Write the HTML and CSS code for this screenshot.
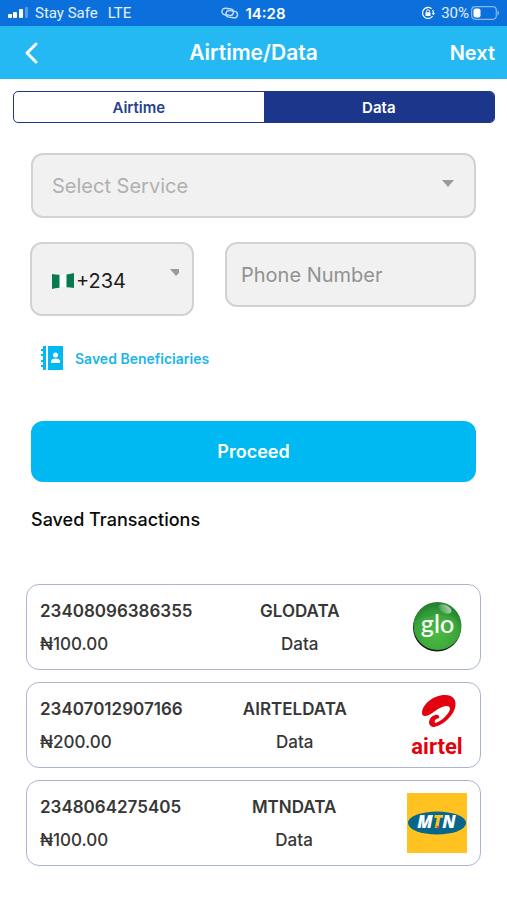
FILE: index.html
```html
<!DOCTYPE html>
<html lang="en">
<head>
<meta charset="utf-8">
<meta name="viewport" content="width=device-width, initial-scale=1">
<title>Airtime/Data</title>
<link rel="stylesheet" href="styles.css">
</head>
<body>
<div class="status">
  <div class="status-side">
    <svg width="21" height="12" viewBox="0 0 21 12" fill="#fff" aria-hidden="true"><rect x="0" y="7" width="4" height="4" rx="1"/><rect x="5" y="5" width="4" height="6" rx="1"/><rect x="11" y="2" width="4" height="9" rx="1"/><rect x="17" y="0" width="3" height="11" rx="1" opacity=".3"/></svg>
    <span>Stay Safe</span>
    <span class="network">LTE</span>
  </div>
  <div class="status-time">
    <svg width="18" height="12" viewBox="0 0 18 12" fill="none" stroke="#c3defc" stroke-width="1.4" aria-hidden="true"><rect x="1" y="1.500" width="11.500" height="6.500" rx="3.200" transform="rotate(8 6 4.500)"/><rect x="5" y="4" width="11.500" height="6.500" rx="3.200" transform="rotate(8 11 7)"/></svg>
    <span>14:28</span>
  </div>
  <div class="status-side status-end">
    <svg class="lock" width="14" height="14" viewBox="0 0 14 14" fill="none" stroke="#fff" aria-hidden="true"><path d="M10.500 2.700A5.500 5.500 0 1 0 11.600 10M12.400 8A5.500 5.500 0 0 0 11.600 4" stroke-width="1.300"/><path d="M10.700 7h3.300l-1.600 2.200z" fill="#fff" stroke="none"/><rect x="4.500" y="6.200" width="5" height="3.800" rx=".6" fill="#fff" stroke="none"/><path d="M5.500 6.500V5.300a1.500 1.500 0 0 1 3 0v1.200"/></svg>
    <span>30%</span>
    <svg width="28" height="14" viewBox="0 0 28 14" aria-hidden="true"><rect x=".7" y=".7" width="24.600" height="12.600" rx="3.500" fill="none" stroke="#82b9f2" stroke-width="1.200"/><rect x="2.500" y="2.500" width="7" height="9" rx="2" fill="#fff"/><path d="M26.500 4.500c2 .6 2 4.400 0 5z" fill="#82b9f2"/></svg>
  </div>
</div>
<header class="bar">
  <button class="back" type="button" aria-label="Back"><svg width="16" height="24" viewBox="0 0 16 24" fill="none" stroke="#fff" stroke-width="3" stroke-linecap="round" stroke-linejoin="round" aria-hidden="true"><path d="M12 3L3 12l9 9"/></svg></button>
  <h1>Airtime/Data</h1>
  <button class="next" type="button">Next</button>
</header>
<main>
  <div class="tabs" role="tablist">
    <button class="tab" type="button" role="tab" aria-selected="false">Airtime</button>
    <button class="tab tab-active" type="button" role="tab" aria-selected="true">Data</button>
  </div>
  <form class="form">
    <div class="field service">
      <select aria-label="Service"><option>Select Service</option></select>
      <svg class="arrow" width="12" height="7" viewBox="0 0 12 7" aria-hidden="true"><path d="M0 0h12L6 7z" fill="#9a9a9a"/></svg>
    </div>
    <div class="phone-row">
      <div class="field country">
        <svg class="flag" width="25" height="18" viewBox="0 0 25 18" aria-hidden="true"><path d="M1 2q11 2.500 22-1v15q-11-2.500-22 1z" fill="#fcfcfc"/><path d="M1 2q4 1 7.500 .8v13Q4 16 1 17zM15.500 2.400Q20 2 23 1v15q-3.500-.8-7.500-.8z" fill="#087a4d"/></svg>
        <select aria-label="Country code"><option>+234</option></select>
        <svg class="caret" width="9" height="7" viewBox="0 0 9 7" aria-hidden="true"><path d="M0 0h9v4L6 7z" fill="#9a9a9a"/></svg>
      </div>
      <input class="field phone" type="tel" aria-label="Phone Number" placeholder="Phone Number">
    </div>
    <a class="saved-link" href="#">
      <svg width="22" height="24" viewBox="0 0 22 24" fill="#00b9f2" aria-hidden="true"><path d="M2 0h3v24H2v-3H0v-2h2v-3H0v-2h2v-4H0V8h2V5H0V3h2z"/><path d="M7 0h15v24H7z"/><circle cx="14.500" cy="9" r="2.500" fill="#fff"/><path d="M10 17v-2q0-2.500 4.500-2.500T19 15v2z" fill="#fff"/></svg>
      <span>Saved Beneficiaries</span>
    </a>
    <button class="proceed" type="button">Proceed</button>
  </form>
  <h2>Saved Transactions</h2>
  <ul class="list">
    <li class="card">
      <div class="lines"><strong>23408096386355</strong><span>₦100.00</span></div>
      <div class="lines middle"><strong>GLODATA</strong><span>Data</span></div>
      <svg width="60" height="60" viewBox="0 0 60 60" role="img" aria-label="glo">
        <defs><radialGradient id="ball" cx=".48" cy=".65" r=".6"><stop offset="0" stop-color="#4dbb43"/><stop offset=".75" stop-color="#39a53a"/><stop offset="1" stop-color="#268330"/></radialGradient><linearGradient id="shine" x1="1" y1="0" x2="0" y2="1"><stop offset="0" stop-color="#fff" stop-opacity=".75"/><stop offset="1" stop-color="#fff" stop-opacity="0"/></linearGradient></defs>
        <circle cx="30" cy="30.500" r="24" fill="#101d10"/><circle cx="30.500" cy="29" r="24" fill="url(#ball)"/><path d="M8 24Q15 5 31 6t21 17Q31 13 8 24z" fill="#248331" opacity=".28"/><ellipse cx="38" cy="12" rx="7" ry="4" transform="rotate(28 38 12)" fill="url(#shine)"/>
        <text x="30.500" y="36" class="glo-text" text-anchor="middle">glo</text>
      </svg>
    </li>
    <li class="card">
      <div class="lines"><strong>23407012907166</strong><span>₦200.00</span></div>
      <div class="lines middle"><strong>AIRTELDATA</strong><span>Data</span></div>
      <svg class="airtel" width="60" height="60" viewBox="0 0 60 60" role="img" aria-label="airtel">
        <path d="M15 18C15 10 26 0 38 0C47 0 50 6 48 13C45 23 33 32 26 32C20 31 21 22 28 20C31 19 33 21 32 23C29 24 27 25 28 28C34 27 42 19 43 14C43 10 38 10 31 14C25 18 22 21 18 21C16 21 15 20 15 18Z" fill="#e3000f"/>
        <text x="30" y="59" class="airtel-text" text-anchor="middle">airtel</text>
      </svg>
    </li>
    <li class="card">
      <div class="lines"><strong>2348064275405</strong><span>₦100.00</span></div>
      <div class="lines middle"><strong>MTNDATA</strong><span>Data</span></div>
      <svg width="60" height="60" viewBox="0 0 60 60" role="img" aria-label="MTN">
        <path d="M0 0h60v60H0z" fill="#ffc220"/><ellipse cx="30" cy="30" rx="29" ry="11.500" fill="#07678b"/>
        <text x="29.500" y="35" class="mtn-text" text-anchor="middle">M<tspan fill="#ffc220">T</tspan>N</text><path d="M29 33h4l-2.500 3z" fill="#e54836"/>
      </svg>
    </li>
  </ul>
</main>
</body>
</html>
```

FILE: styles.css
```css
* { box-sizing: border-box; }
body { margin: 0; background: #fff; color: #0a0a0a; font-family: Inter, "Liberation Sans", sans-serif; }
button, select, input { font: inherit; color: inherit; margin: 0; }
button { border: 0; padding: 0; background: none; }
svg { display: block; flex: none; }

.status {
  display: grid; grid-template-columns: 1fr auto 1fr; align-items: center;
  height: 26px; padding: 2px 8px;
  background: #0b70db; color: #e4f0ff; font-family: Roboto, sans-serif; font-size: 15px;
}
.status-side, .status-time { display: flex; align-items: center; gap: 6px; }
.network { margin-left: 4px; }
.status-time { font-family: Inter, sans-serif; font-weight: 600; color: #fff; }
.status-end { justify-content: flex-end; gap: 2px; }
.lock { margin-right: 4px; }

.bar {
  display: grid; grid-template-columns: 1fr auto 1fr; align-items: center;
  height: 53px; padding: 0 12px; background: #25b9f4; color: #fff;
}
.back { justify-self: start; padding: 0 12px; }
.bar h1 { margin: 0; font-size: 21px; line-height: 26px; font-weight: 600; }
.next { justify-self: end; font-size: 20px; font-weight: 600; }

.tabs {
  display: flex; margin: 12px 12px 0 13px; height: 32px; overflow: hidden;
  border: 1px solid #1b368b; border-radius: 5px;
}
.tab { flex: 13; font-size: 15px; font-weight: 600; color: #27418e; }
.tab-active { flex: 12; background: #1b368b; color: #fff; }

.form { padding: 0 31px; }
.field {
  display: flex; align-items: center; min-width: 0;
  border: 2px solid #d2d2d2; border-radius: 12px; background: #f1f1f1; font-size: 20px;
}
.field select {
  flex: 1; min-width: 0; height: 100%; padding: 0;
  appearance: none; border: 0; outline: 0; background: transparent;
}
.service { height: 65px; margin-top: 30px; padding: 0 20px 0 19px; color: #b0b0b0; }
.arrow { margin-bottom: 4px; }
.phone-row {
  display: grid; grid-template-columns: 164fr 251fr; align-items: start; gap: 31px;
  margin: 24px 0 0 -1px;
}
.country { height: 74px; padding: 4px 13px 0 19px; color: #1c1c1c; }
.caret { margin-bottom: 18px; }
.phone { width: 100%; height: 65px; padding: 0 14px; outline: 0; }
.phone::placeholder { color: #929292; opacity: 1; }
.saved-link {
  display: flex; width: fit-content; align-items: center; gap: 12px; margin: 30px 0 0 10px;
  color: #20b5e8; font-size: 14px; font-weight: 600; text-decoration: none;
}
.proceed {
  display: block; width: 100%; height: 61px; margin-top: 51px;
  border-radius: 12px; background: #00b9f2; color: #fff; font-size: 18px; font-weight: 600;
}
h2 { margin: 26px 31px 0; font-size: 18px; line-height: 24px; font-weight: 500; }

.list { display: grid; gap: 12px; margin: 52px 26px 35px; padding: 0; list-style: none; }
.card {
  display: flex; align-items: center; justify-content: space-between;
  height: 86px; padding: 0 13px; border: 1px solid #a9b5d2; border-radius: 13px;
}
.lines { display: grid; gap: 9px; color: #373737; font-size: 17px; line-height: 24px; }
.lines strong { font-weight: 600; }
.lines span { font-weight: 500; }
.middle { text-align: center; }
.airtel { overflow: visible; }
.glo-text { font: 500 25px Lato, sans-serif; fill: #fff; }
.airtel-text { font: 700 22px Roboto, sans-serif; fill: #e3000f; }
.mtn-text { font: italic 800 17px "Open Sans", sans-serif; fill: #fff; }
```
